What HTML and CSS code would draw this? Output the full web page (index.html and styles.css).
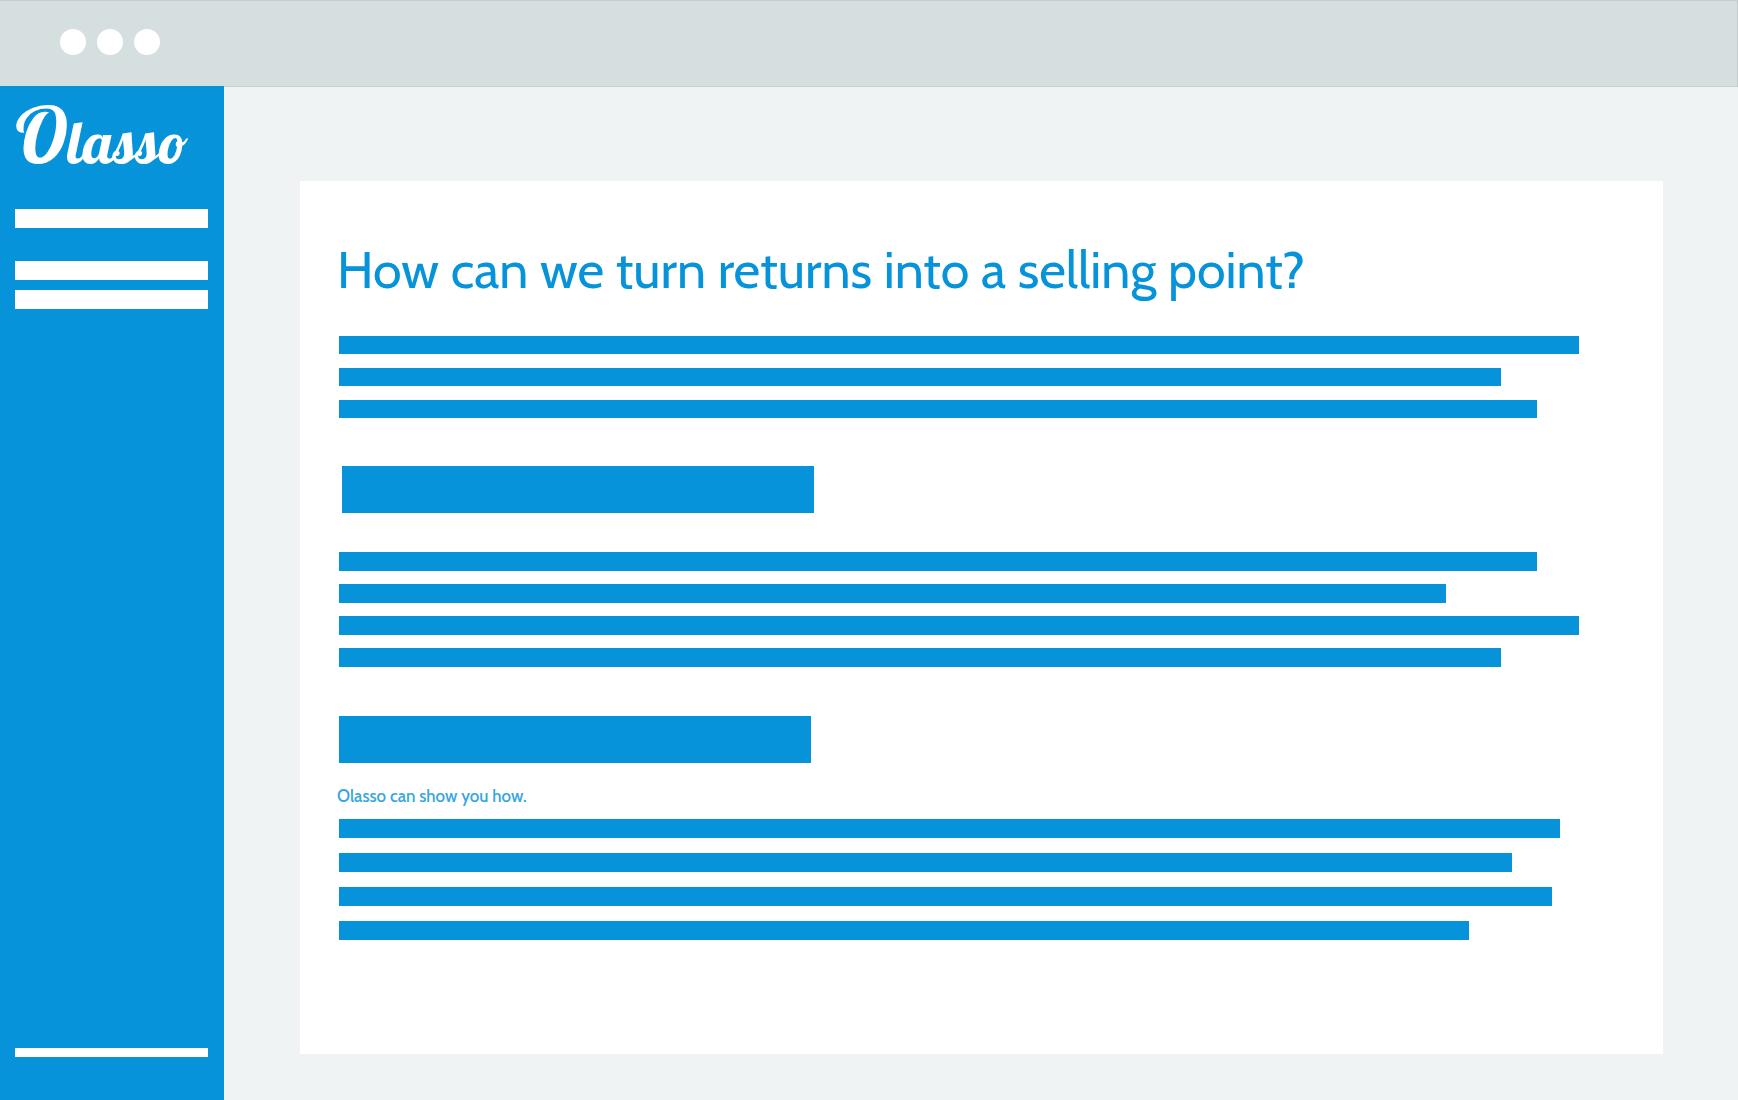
FILE: index.html
```html
<!DOCTYPE html>
<html lang="en">
<head>
<meta charset="utf-8">
<meta name="viewport" content="width=device-width, initial-scale=1">
<title>Olasso</title>
<link rel="stylesheet" href="styles.css">
</head>
<body>
<header class="titlebar">
  <span class="dot"></span>
  <span class="dot"></span>
  <span class="dot"></span>
</header>
<div class="layout">
  <aside class="sidebar">
    <div class="logo"><span class="logo-initial">O</span>lasso</div>
    <div class="side-bar side-title"></div>
    <div class="side-list">
      <div class="side-bar"></div>
      <div class="side-bar"></div>
    </div>
    <div class="side-foot"></div>
  </aside>
  <main class="main">
    <article class="card">
      <h1 class="title">How can we turn returns into a selling point?</h1>
      <div class="lines lines-intro">
        <div class="line w-100"></div>
        <div class="line w-94"></div>
        <div class="line w-97"></div>
      </div>
      <div class="block block-first"></div>
      <div class="lines lines-body">
        <div class="line w-97"></div>
        <div class="line w-89"></div>
        <div class="line w-100"></div>
        <div class="line w-94"></div>
      </div>
      <div class="block block-second"></div>
      <p class="note">Olasso can show you how.</p>
      <div class="lines lines-end">
        <div class="line w-985"></div>
        <div class="line w-95"></div>
        <div class="line w-978"></div>
        <div class="line w-91"></div>
      </div>
    </article>
  </main>
</div>
</body>
</html>
```
FILE: styles.css
```css
* {
  box-sizing: border-box;
}

body {
  margin: 0;
  min-height: 100vh;
  display: flex;
  flex-direction: column;
  background: #eff3f4;
  color: #0693da;
  font-family: Cabin, Lato, "Open Sans", sans-serif;
}

.titlebar {
  display: flex;
  align-items: center;
  gap: 11px;
  height: 87px;
  padding: 0 60px 3px;
  background: #d6dfe0;
  border: 1px solid #c4cdcf;
  border-left: 0;
}

.dot {
  width: 26px;
  height: 26px;
  border-radius: 50%;
  background: #fff;
}

.layout {
  flex: 1;
  display: flex;
  margin-top: -1px;
}

.sidebar {
  flex: 0 0 224px;
  display: flex;
  flex-direction: column;
  padding: 0 16px 43px 15px;
  background: #0693da;
}

.logo {
  height: 123px;
  line-height: 98px;
  color: #fff;
  font-family: Lobster, "Liberation Serif", serif;
  font-size: 59px;
  font-weight: 400;
  white-space: nowrap;
}

.logo-initial {
  font-size: 79px;
}

.side-bar {
  height: 19px;
  background: #fff;
}

.side-title {
  margin-bottom: 33px;
}

.side-list {
  display: flex;
  flex-direction: column;
  gap: 10px;
}

.side-foot {
  height: 9px;
  margin-top: auto;
  background: #fff;
}

.main {
  flex: 1;
  min-width: 0;
  display: flex;
  padding: 95px 75px 46px 76px;
}

.card {
  flex: 1;
  min-width: 0;
  padding: 59px 84px 60px 37px;
  background: #fff;
}

.title {
  margin: 0 0 36px;
  font-size: 52px;
  line-height: 60px;
  font-weight: 400;
}

.lines {
  display: flex;
  flex-direction: column;
  margin-left: 2px;
}

.line {
  height: 19px;
  background: #0693da;
}

.lines-intro {
  gap: 14px;
}

.lines-intro .line {
  height: 18px;
}

.lines-body {
  gap: 13px;
}

.lines-end {
  gap: 15px;
}

.block {
  width: 38%;
  height: 47px;
  background: #0693da;
}

.block-first {
  margin: 48px 0 39px 5px;
}

.block-second {
  margin: 49px 0 21px 2px;
}

.note {
  margin: 0 0 11px;
  font-size: 17px;
  line-height: 24px;
  color: #38a6df;
  font-weight: 500;
}

.w-100 { width: 100%; }
.w-985 { width: 98.5%; }
.w-978 { width: 97.8%; }
.w-97 { width: 96.6%; }
.w-95 { width: 94.6%; }
.w-94 { width: 93.7%; }
.w-91 { width: 91.1%; }
.w-89 { width: 89.3%; }
```
